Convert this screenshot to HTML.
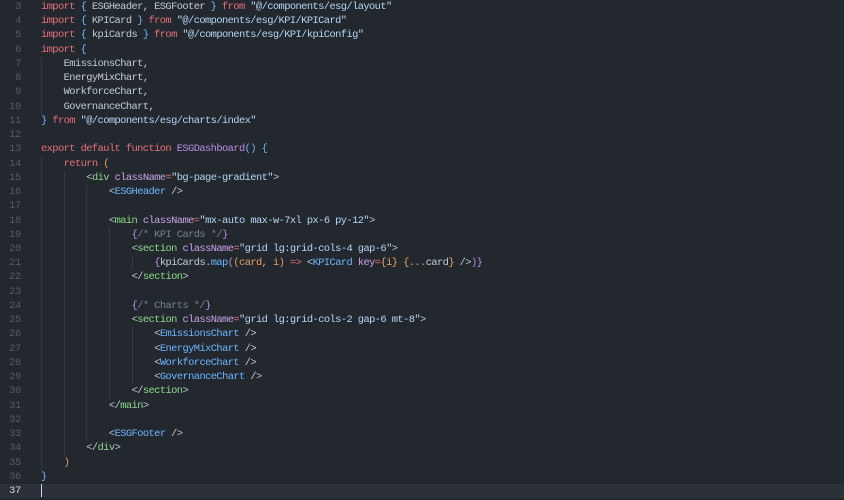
<!DOCTYPE html>
<html><head><meta charset="utf-8"><style>
body{margin:0;background:#23272e;width:844px;height:500px;overflow:hidden;font-family:"Liberation Mono",monospace;font-size:10.4px;letter-spacing:-0.58px;color:#c2ccd6}
.l{position:relative;height:14.24px;line-height:14.24px;white-space:pre}
.n{position:absolute;left:0;width:21px;text-align:right;color:#545b66;letter-spacing:-0.3px}
.c{position:absolute;left:41px}
.i{display:inline-block;width:22.65px;height:14.24px;vertical-align:top;box-shadow:inset 1px 0 #343a43}
.k{color:#e5717b}.s{color:#b5d6f5}.p{color:#6cb6ff}.t{color:#8ddb8c}.a{color:#c9a2e8}.f{color:#b98ee8}.o{color:#e8a064}.m{color:#768390}
.cur{background:#2b3039}.cur .n{color:#cdd9e5}
#wrap{position:absolute;top:0;left:0;width:844px}
</style></head><body><div id="wrap">
<div class="l"><span class="n">3</span><span class="c"><span class="k">import</span> <span class="p">{</span> ESGHeader, ESGFooter <span class="p">}</span> <span class="k">from</span> <span class="s">"@/components/esg/layout"</span></span></div>
<div class="l"><span class="n">4</span><span class="c"><span class="k">import</span> <span class="p">{</span> KPICard <span class="p">}</span> <span class="k">from</span> <span class="s">"@/components/esg/KPI/KPICard"</span></span></div>
<div class="l"><span class="n">5</span><span class="c"><span class="k">import</span> <span class="p">{</span> kpiCards <span class="p">}</span> <span class="k">from</span> <span class="s">"@/components/esg/KPI/kpiConfig"</span></span></div>
<div class="l"><span class="n">6</span><span class="c"><span class="k">import</span> <span class="p">{</span></span></div>
<div class="l"><span class="n">7</span><span class="c"><span class="i"></span>EmissionsChart,</span></div>
<div class="l"><span class="n">8</span><span class="c"><span class="i"></span>EnergyMixChart,</span></div>
<div class="l"><span class="n">9</span><span class="c"><span class="i"></span>WorkforceChart,</span></div>
<div class="l"><span class="n">10</span><span class="c"><span class="i"></span>GovernanceChart,</span></div>
<div class="l"><span class="n">11</span><span class="c"><span class="p">}</span> <span class="k">from</span> <span class="s">"@/components/esg/charts/index"</span></span></div>
<div class="l"><span class="n">12</span></div>
<div class="l"><span class="n">13</span><span class="c"><span class="k">export default function</span> <span class="f">ESGDashboard</span><span class="p">() {</span></span></div>
<div class="l"><span class="n">14</span><span class="c"><span class="i"></span><span class="k">return</span> <span class="o">(</span></span></div>
<div class="l"><span class="n">15</span><span class="c"><span class="i"></span><span class="i"></span>&lt;<span class="t">div</span> <span class="a">className</span><span class="k">=</span><span class="s">"bg-page-gradient"</span>&gt;</span></div>
<div class="l"><span class="n">16</span><span class="c"><span class="i"></span><span class="i"></span><span class="i"></span>&lt;<span class="p">ESGHeader</span> /&gt;</span></div>
<div class="l"><span class="n">17</span><span class="c"><span class="i"></span><span class="i"></span><span class="i"></span></span></div>
<div class="l"><span class="n">18</span><span class="c"><span class="i"></span><span class="i"></span><span class="i"></span>&lt;<span class="t">main</span> <span class="a">className</span><span class="k">=</span><span class="s">"mx-auto max-w-7xl px-6 py-12"</span>&gt;</span></div>
<div class="l"><span class="n">19</span><span class="c"><span class="i"></span><span class="i"></span><span class="i"></span><span class="i"></span><span class="f">{</span><span class="m">/* KPI Cards */</span><span class="f">}</span></span></div>
<div class="l"><span class="n">20</span><span class="c"><span class="i"></span><span class="i"></span><span class="i"></span><span class="i"></span>&lt;<span class="t">section</span> <span class="a">className</span><span class="k">=</span><span class="s">"grid lg:grid-cols-4 gap-6"</span>&gt;</span></div>
<div class="l"><span class="n">21</span><span class="c"><span class="i"></span><span class="i"></span><span class="i"></span><span class="i"></span><span class="i"></span><span class="f">{</span>kpiCards.<span class="p">map</span><span class="f">(</span><span class="o">(card, i)</span> <span class="k">=&gt;</span> &lt;<span class="p">KPICard</span> <span class="a">key</span><span class="k">=</span><span class="o">{i}</span> <span class="o">{...</span>card<span class="o">}</span> /&gt;<span class="f">)}</span></span></div>
<div class="l"><span class="n">22</span><span class="c"><span class="i"></span><span class="i"></span><span class="i"></span><span class="i"></span>&lt;/<span class="t">section</span>&gt;</span></div>
<div class="l"><span class="n">23</span><span class="c"><span class="i"></span><span class="i"></span><span class="i"></span><span class="i"></span></span></div>
<div class="l"><span class="n">24</span><span class="c"><span class="i"></span><span class="i"></span><span class="i"></span><span class="i"></span><span class="f">{</span><span class="m">/* Charts */</span><span class="f">}</span></span></div>
<div class="l"><span class="n">25</span><span class="c"><span class="i"></span><span class="i"></span><span class="i"></span><span class="i"></span>&lt;<span class="t">section</span> <span class="a">className</span><span class="k">=</span><span class="s">"grid lg:grid-cols-2 gap-6 mt-8"</span>&gt;</span></div>
<div class="l"><span class="n">26</span><span class="c"><span class="i"></span><span class="i"></span><span class="i"></span><span class="i"></span><span class="i"></span>&lt;<span class="p">EmissionsChart</span> /&gt;</span></div>
<div class="l"><span class="n">27</span><span class="c"><span class="i"></span><span class="i"></span><span class="i"></span><span class="i"></span><span class="i"></span>&lt;<span class="p">EnergyMixChart</span> /&gt;</span></div>
<div class="l"><span class="n">28</span><span class="c"><span class="i"></span><span class="i"></span><span class="i"></span><span class="i"></span><span class="i"></span>&lt;<span class="p">WorkforceChart</span> /&gt;</span></div>
<div class="l"><span class="n">29</span><span class="c"><span class="i"></span><span class="i"></span><span class="i"></span><span class="i"></span><span class="i"></span>&lt;<span class="p">GovernanceChart</span> /&gt;</span></div>
<div class="l"><span class="n">30</span><span class="c"><span class="i"></span><span class="i"></span><span class="i"></span><span class="i"></span>&lt;/<span class="t">section</span>&gt;</span></div>
<div class="l"><span class="n">31</span><span class="c"><span class="i"></span><span class="i"></span><span class="i"></span>&lt;/<span class="t">main</span>&gt;</span></div>
<div class="l"><span class="n">32</span><span class="c"><span class="i"></span><span class="i"></span><span class="i"></span></span></div>
<div class="l"><span class="n">33</span><span class="c"><span class="i"></span><span class="i"></span><span class="i"></span>&lt;<span class="p">ESGFooter</span> /&gt;</span></div>
<div class="l"><span class="n">34</span><span class="c"><span class="i"></span><span class="i"></span>&lt;/<span class="t">div</span>&gt;</span></div>
<div class="l"><span class="n">35</span><span class="c"><span class="i"></span><span class="o">)</span></span></div>
<div class="l"><span class="n">36</span><span class="c"><span class="p">}</span></span></div>
<div class="l cur"><span class="n">37</span><span class="c"><span style="display:inline-block;width:1px;height:13px;background:#cdd9e5;vertical-align:middle"></span></span></div>
</div></body></html>
